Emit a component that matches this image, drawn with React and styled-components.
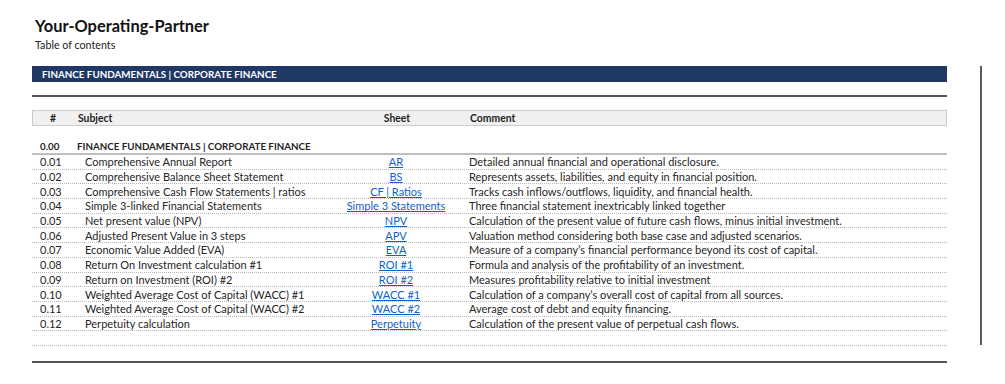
import React from "react";
import styled, { createGlobalStyle } from "styled-components";

const Global = createGlobalStyle`
  html, body { margin: 0; padding: 0; background: #ffffff; }
  body { font-family: Lato, "Liberation Sans", sans-serif; color: #1f1f1f; }
`;

const Page = styled.div`
  display: flex;
  align-items: flex-start;
  width: 1005px;
  height: 384px;
  overflow: hidden;
`;

const Main = styled.div`
  margin-left: 32px;
  width: 915px;
  display: flex;
  flex-direction: column;
`;

const RightRule = styled.div`
  margin-left: 33px;
  margin-top: 66px;
  width: 2px;
  height: 279px;
  background: #5a5a5a;
`;

const TitleBlock = styled.div`
  padding: 16px 0 0 3px;
  height: 66px;
  box-sizing: border-box;
`;

const Title = styled.h1`
  margin: 0;
  font-size: 16.4px;
  line-height: 20px;
  font-weight: 700;
  color: #111;
`;

const Subtitle = styled.div`
  font-size: 10.7px;
  line-height: 14px;
  margin-top: 2px;
  color: #222;
`;

const Band = styled.div`
  height: 16px;
  background: #203864;
  color: #fff;
  font-weight: 700;
  font-size: 9.8px;
  line-height: 16px;
  padding-left: 10px;
`;

const HeavyRule = styled.div`
  margin-top: ${p => p.$top ?? 13}px;
  border-top: 2px solid #555;
`;

const Cols = `
  display: grid;
  grid-template-columns: 40px 259px 130px 1fr;
  align-items: center;
`;

const HeaderRow = styled.div`
  ${Cols}
  margin-top: 13px;
  height: 16px;
  box-sizing: border-box;
  background: #f0f0f0;
  border: 1px solid #cccccc;
  font-weight: 700;
  font-size: 10.4px;
  line-height: 14px;
`;

const Cell = styled.div`
  padding-left: ${p => p.$pad ?? 0}px;
  text-align: ${p => p.$align || "left"};
  white-space: nowrap;
`;

const SectionRow = styled.div`
  ${Cols}
  margin-top: 13px;
  height: 16px;
  box-sizing: border-box;
  border-bottom: 2px solid #bfbfbf;
  font-weight: 700;
  font-size: 9.75px;
  line-height: 14px;
`;

const Row = styled.div`
  ${Cols}
  height: 14.7px;
  box-sizing: border-box;
  border-bottom: 1px dotted #b8b8b8;
  font-size: 11px;
  line-height: 13px;
  color: #262626;
`;

const SheetLink = styled.a`
  color: #1160c9;
  text-decoration: underline;
  cursor: pointer;
`;

const Gap = styled.div`
  height: 14.7px;
`;

const rows = [
  ["0.01", "Comprehensive Annual Report", "AR", "Detailed annual financial and operational disclosure."],
  ["0.02", "Comprehensive Balance Sheet Statement", "BS", "Represents assets, liabilities, and equity in financial position."],
  ["0.03", "Comprehensive Cash Flow Statements | ratios", "CF | Ratios", "Tracks cash inflows/outflows, liquidity, and financial health."],
  ["0.04", "Simple 3-linked Financial Statements", "Simple 3 Statements", "Three financial statement inextricably linked together"],
  ["0.05", "Net present value (NPV)", "NPV", "Calculation of the present value of future cash flows, minus initial investment."],
  ["0.06", "Adjusted Present Value in 3 steps", "APV", "Valuation method considering both base case and adjusted scenarios."],
  ["0.07", "Economic Value Added (EVA)", "EVA", "Measure of a company\u2019s financial performance beyond its cost of capital."],
  ["0.08", "Return On Investment calculation #1", "ROI #1", "Formula and analysis of the profitability of an investment."],
  ["0.09", "Return on Investment (ROI) #2", "ROI #2", "Measures profitability relative to initial investment"],
  ["0.10", "Weighted Average Cost of Capital (WACC) #1", "WACC #1", "Calculation of a company\u2019s overall cost of capital from all sources."],
  ["0.11", "Weighted Average Cost of Capital (WACC) #2", "WACC #2", "Average cost of debt and equity financing."],
  ["0.12", "Perpetuity calculation", "Perpetuity", "Calculation of the present value of perpetual cash flows."],
];

export default function App() {
  return (
    <>
      <Global />
      <Page>
        <Main>
          <TitleBlock>
            <Title>Your-Operating-Partner</Title>
            <Subtitle>Table of contents</Subtitle>
          </TitleBlock>
          <Band>FINANCE FUNDAMENTALS | CORPORATE FINANCE</Band>
          <HeavyRule />
          <HeaderRow>
            <Cell $align="center">#</Cell>
            <Cell $pad={5}>Subject</Cell>
            <Cell $align="center">Sheet</Cell>
            <Cell $pad={8}>Comment</Cell>
          </HeaderRow>
          <SectionRow>
            <Cell $pad={8}>0.00</Cell>
            <Cell $pad={5}>FINANCE FUNDAMENTALS | CORPORATE FINANCE</Cell>
            <Cell />
            <Cell />
          </SectionRow>
          {rows.map(([n, subj, sheet, comment]) => (
            <Row key={n}>
              <Cell $pad={8}>{n}</Cell>
              <Cell $pad={13}>{subj}</Cell>
              <Cell $align="center"><SheetLink>{sheet}</SheetLink></Cell>
              <Cell $pad={8}>{comment}</Cell>
            </Row>
          ))}
          <Row>
            <Cell />
            <Cell />
            <Cell />
            <Cell />
          </Row>
          <Gap />
          <HeavyRule $top={0} />
        </Main>
        <RightRule />
      </Page>
    </>
  );
}
